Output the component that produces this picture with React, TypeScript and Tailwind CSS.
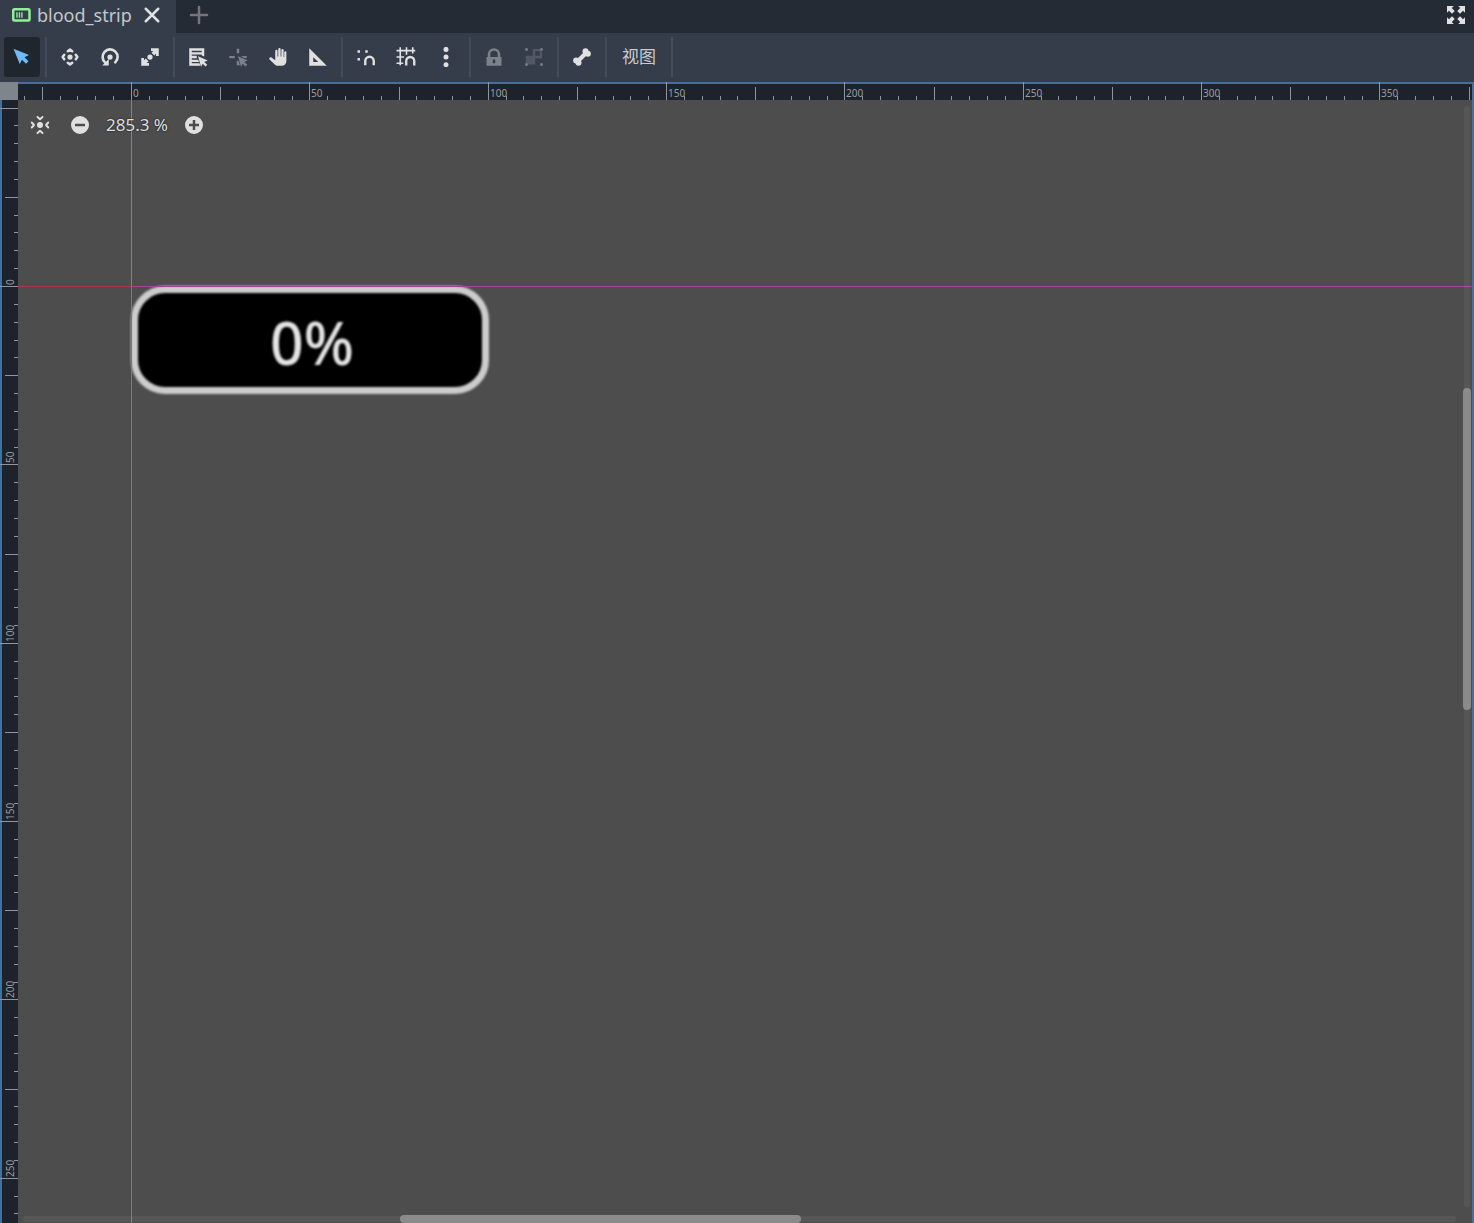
import { useEffect, useState, type ReactNode } from "react";

const ZOOM = 3.567;
const ORIGIN_X = 131;
const ORIGIN_Y = 204;
const RULER = 18;
const LABEL = 26;
const TOP_BARS = 82;

const scrollX = { start: 26.3, size: 28 };
const scrollY = { start: 25.6, size: 29.3 };

function Icon({ children, className = "" }: { children: ReactNode; className?: string }) {
  return (
    <svg viewBox="0 0 16 16" className={`h-5 w-5 shrink-0 ${className}`} fill="currentColor" aria-hidden="true">
      {children}
    </svg>
  );
}

const cursor = "M8 7.4 15.8 10.8 13 12 15.4 14.2 14 15.6 11.8 13.4 10.4 15.8z";

const icons = {
  select: <path d="M1.2 1.4 13.6 6.4 10 8.2 13.2 11.4 11.2 13.4 8 10.2 6.2 13.6z" />,
  move: (
    <>
      <circle cx="8" cy="8" r="2.1" />
      <path
        d="M6.2 3.4 8 2.1l1.8 1.3M6.2 12.6 8 13.9l1.8-1.3M3.4 6.2 2.1 8l1.3 1.8M12.6 6.2 13.9 8l-1.3 1.8"
        fill="none"
        stroke="currentColor"
        strokeWidth="2"
        strokeLinecap="round"
        strokeLinejoin="round"
      />
    </>
  ),
  rotate: (
    <>
      <circle cx="8" cy="8" r="2.1" />
      <path d="M4.2 12.5A6 6 0 1 1 12.2 12.3" fill="none" stroke="currentColor" strokeWidth="2.1" strokeLinecap="round" />
      <path d="M1.8 14.8h5.2V9.6z" />
    </>
  ),
  scale: (
    <>
      <circle cx="8" cy="8" r="2.1" />
      <path d="M8.8 1H15v6.2h-2.2V5.4l-1.4 1.4-2.2-2.2 1.4-1.4H8.8zM7.2 15H1V8.8h2.2v1.8l1.4-1.4 2.2 2.2-1.4 1.4h1.8z" />
    </>
  ),
  list: (
    <>
      <path d="M1 1h12v6.6l-2-.9V6H3v1h4v2H3v1.2h5.2l.6 1.8H3v1h6.2l.6 2H1zM3 3v1.2h8V3z" fillRule="evenodd" />
      <path d={cursor} />
    </>
  ),
  pivot: (
    <>
      <path d="M7 1.4h2V5H7zM1 7.2h4.4v1.8H1zM11 7.2h4v1.8h-1L11 7.9zM7 11h1.4l1.2 3.6H7z" />
      <path d={cursor} />
    </>
  ),
  hand: (
    <path d="M5.8 3a.9.9 0 0 1 1.8 0v4.5h.6V1.7a.9.9 0 0 1 1.9 0v5.8h.6V2.4a.9.9 0 0 1 1.8 0V8h.5V4a.9.9 0 0 1 1.7 0v7.2A4 4 0 0 1 10.8 15H8c-1.3 0-2.3-.5-3-1.4L1.2 9.9C.5 8.7 1.8 7.6 3 8.5l2.8 2z" />
  ),
  ruler: <path d="M1 1v14h14zM4.2 8.2 8.2 12H4.2z" fillRule="evenodd" />,
  snap: (
    <>
      <path d="M1.2 2.6h2v2h-2zM7.4 2.6h2v2h-2zM1.2 8.8h2v2h-2z" />
      <path d="M7.4 14.6v-3.4a3.4 3.4 0 0 1 6.8 0v3.4" fill="none" stroke="currentColor" strokeWidth="1.9" />
    </>
  ),
  grid: (
    <>
      <path d="M3.4.2v14.4M8.4.2v6M13.4.2v5M.4 2.9h15M.4 8h6M.4 13h5.4" fill="none" stroke="currentColor" strokeWidth="1.3" />
      <path d="M8.2 14.8v-3.6a3.2 3.2 0 0 1 6.4 0v3.6" fill="none" stroke="currentColor" strokeWidth="1.9" />
    </>
  ),
  dots: (
    <>
      <circle cx="8" cy="1.9" r="2" />
      <circle cx="8" cy="8" r="2" />
      <circle cx="8" cy="14.1" r="2" />
    </>
  ),
  lock: (
    <path
      d="M8 1a5 5 0 0 0-5 5v2H2v7h12V8h-1V6a5 5 0 0 0-5-5zm0 2a3 3 0 0 1 3 3v2H5V6a3 3 0 0 1 3-3zM7 10h2v3H7z"
      fillRule="evenodd"
    />
  ),
  group: (
    <>
      <path d="M1 1h2v2H1zM13 1h2v2h-2zM1 13h2v2H1zM13 13h2v2h-2z" />
      <path d="M7 1.6h6v1.8h1.4v5.8H9V14H3V13H1.4V7H7zM9 3.4V7h3.6V3.4z" fillRule="evenodd" opacity=".4" />
    </>
  ),
  bone: (
    <>
      <circle cx="10.8" cy="3.4" r="2.4" />
      <circle cx="12.7" cy="5.3" r="2.4" />
      <circle cx="3.3" cy="10.7" r="2.4" />
      <circle cx="5.2" cy="12.6" r="2.4" />
      <path d="M4.6 11.4l6.8-6.8" stroke="currentColor" strokeWidth="3.4" />
    </>
  ),
  center: (
    <>
      <circle cx="8" cy="8" r="2.4" />
      <path
        d="M6 1.6 8 3.4l2-1.8M6 14.4l2-1.8 2 1.8M1.4 6l1.8 2-1.8 2M14.6 6l-1.8 2 1.8 2"
        fill="none"
        stroke="currentColor"
        strokeWidth="1.5"
        strokeLinecap="round"
        strokeLinejoin="round"
      />
    </>
  ),
  minus: <path d="M8 .8a7.2 7.2 0 1 0 0 14.4A7.2 7.2 0 0 0 8 .8zM4 7h8v2H4z" fillRule="evenodd" />,
  plus: <path d="M8 .8a7.2 7.2 0 1 0 0 14.4A7.2 7.2 0 0 0 8 .8zM7 4h2v3h3v2H9v3H7V9H4V7h3z" fillRule="evenodd" />,
  expand: (
    <path d="M.8.8h5.4L4.6 2.4 7 4.8 4.8 7 2.4 4.6.8 6.2zM15.2.8v5.4l-1.6-1.6L11.2 7 9 4.8l2.4-2.4L9.8.8zM.8 15.2V9.8l1.6 1.6L4.8 9 7 11.2l-2.4 2.4 1.6 1.6zM15.2 15.2H9.8l1.6-1.6L9 11.2 11.2 9l2.4 2.4 1.6-1.6z" />
  ),
  progress: (
    <>
      <rect x="1" y="3.4" width="13" height="9" rx="1" fill="none" stroke="currentColor" strokeWidth="2" />
      <path d="M3.4 5.8h1.1v4.4H3.4zM5.4 5.8h1.1v4.4H5.4zM7.4 5.8h1.1v4.4H7.4z" />
    </>
  ),
};

type Tool = { icon: keyof typeof icons; label: string; active?: boolean; disabled?: boolean };

const toolGroups: Tool[][] = [
  [{ icon: "select", label: "选择模式", active: true }],
  [
    { icon: "move", label: "移动模式" },
    { icon: "rotate", label: "旋转模式" },
    { icon: "scale", label: "缩放模式" },
  ],
  [
    { icon: "list", label: "列表选择" },
    { icon: "pivot", label: "更改轴心", disabled: true },
    { icon: "hand", label: "平移模式" },
    { icon: "ruler", label: "标尺模式" },
  ],
  [
    { icon: "snap", label: "智能吸附" },
    { icon: "grid", label: "栅格吸附" },
    { icon: "dots", label: "吸附选项" },
  ],
  [
    { icon: "lock", label: "锁定", disabled: true },
    { icon: "group", label: "编组", disabled: true },
  ],
  [{ icon: "bone", label: "骨架选项" }],
];

function toolColor(tool: Tool) {
  if (tool.active) return "bg-[#1f262e] text-[#70bafa]";
  if (tool.disabled) return "text-[#7c818a]";
  return "text-[#e0e0e0]";
}

function Separator() {
  return <div className="mx-[5px] h-10 w-0.5 bg-[#454c59]" />;
}

function useWindowSize() {
  const [size, setSize] = useState({ width: window.innerWidth, height: window.innerHeight });

  useEffect(() => {
    const update = () => setSize({ width: window.innerWidth, height: window.innerHeight });
    window.addEventListener("resize", update);
    return () => window.removeEventListener("resize", update);
  }, []);

  return size;
}

// one tick every 5 units, a half tick every 25 and a labelled one every 50
function getTicks(origin: number, length: number) {
  const step = 5 * ZOOM;
  const first = Math.ceil((RULER - origin) / step);
  const last = Math.floor((length - origin) / step);
  return Array.from({ length: last - first + 1 }, (_, i) => {
    const tick = first + i;
    const position = Math.round(origin + tick * step);
    return {
      position,
      start: tick % 10 === 0 ? 0 : tick % 5 === 0 ? 5 : 14,
      label: tick % 10 === 0 && tick >= 0 && position + LABEL < length ? tick * 5 : null,
    };
  });
}

function HorizontalRuler({ length }: { length: number }) {
  return (
    <svg className="pointer-events-none absolute top-0 left-0 h-[18px] w-full" aria-hidden="true">
      {getTicks(ORIGIN_X, length).map(({ position, start, label }) => (
        <g key={position}>
          <rect x={position} y={start} width="1" height={RULER - start} fill="#90959c" />
          {label !== null && (
            <text x={position + 2} y="15" fill="#9a9da2" fontSize="10">
              {label}
            </text>
          )}
        </g>
      ))}
    </svg>
  );
}

function VerticalRuler({ length }: { length: number }) {
  return (
    <svg className="pointer-events-none absolute top-0 left-0 h-full w-[18px]" aria-hidden="true">
      {getTicks(ORIGIN_Y, length).map(({ position, start, label }) => (
        <g key={position}>
          <rect x={start} y={position} width={RULER - start} height="1" fill="#90959c" />
          {label !== null && (
            <text transform={`translate(14 ${position - 1}) rotate(-90)`} fill="#9a9da2" fontSize="10">
              {label}
            </text>
          )}
        </g>
      ))}
      <rect width="18" height="18" fill="#7f858c" />
    </svg>
  );
}

function TabBar() {
  return (
    <header className="flex h-[33px] items-stretch justify-between bg-[#252b34]">
      <div className="flex">
        <div className="flex w-44 items-center bg-[#363d4a] pb-[3px] pl-3">
          <Icon className="text-[#8eef97]">{icons.progress}</Icon>
          <span className="ml-[5px] text-[18px] leading-6 text-[#c4c7cb]">blood_strip</span>
          <button type="button" aria-label="关闭" className="mr-3 ml-auto flex w-6 items-center justify-center text-[#e0e0e0]">
            <Icon>
              <path d="m3 3 10 10M13 3 3 13" stroke="currentColor" strokeWidth="2" strokeLinecap="round" />
            </Icon>
          </button>
        </div>
        <button type="button" aria-label="添加场景" className="ml-[11px] flex w-6 items-center justify-center pb-[3px] text-[#747678]">
          <Icon>
            <path d="M8 1.6v12.8M1.6 8h12.8" stroke="currentColor" strokeWidth="2" strokeLinecap="round" />
          </Icon>
        </button>
      </div>
      <button type="button" aria-label="专注模式" className="mr-1 flex w-7 items-center justify-center pb-[3px] text-[#e0e0e0]">
        <Icon>{icons.expand}</Icon>
      </button>
    </header>
  );
}

function Toolbar() {
  return (
    <div className="flex h-[49px] items-start bg-[#363d4a] pt-1 pl-1">
      {toolGroups.map((group, index) => (
        <div key={index} className="flex items-center">
          <div className="flex gap-1">
            {group.map((tool) => (
              <button
                key={tool.icon}
                type="button"
                aria-label={tool.label}
                disabled={tool.disabled}
                className={`flex h-10 w-9 items-center justify-center rounded-[3px] ${toolColor(tool)}`}
              >
                <Icon>{icons[tool.icon]}</Icon>
              </button>
            ))}
          </div>
          <Separator />
        </div>
      ))}
      <button type="button" className="h-10 px-[10px] text-[17px] text-[#c8cacf]">
        视图
      </button>
      <Separator />
    </div>
  );
}

function Viewport() {
  const { width, height } = useWindowSize();

  return (
    <main className="relative flex-1 overflow-hidden bg-[#4d4d4d]">
      <div className="absolute inset-x-0 top-0 h-[18px] bg-[#1e232b]" />
      <div className="absolute inset-y-0 left-0 w-[18px] bg-[#1e232b]" />

      <div className="absolute top-[204px] left-[131px] flex h-[108px] w-[358px] items-center justify-center rounded-[34px] border-[7px] border-[#cccccc] bg-black blur-[1px]">
        <span className="pt-1 pl-1 text-[59px] leading-none font-medium text-[#e4e4e4]">0%</span>
      </div>

      <div className="absolute top-[204px] bottom-0 left-[131px] w-px bg-[#708472]" />
      <div className="absolute top-[18px] left-[131px] h-[186px] w-px bg-[#76983a]" />
      <div className="absolute top-[204px] left-[18px] h-px w-[113px] bg-[#b03545]" />
      <div className="absolute top-[204px] right-0 left-[131px] h-px bg-[#a04695]" />

      <div className="pointer-events-none absolute inset-0 border-x-2 border-t-2 border-[#44719b]" />
      <HorizontalRuler length={width} />
      <VerticalRuler length={height - TOP_BARS} />

      <div className="absolute top-[25px] left-[22px] flex text-[#e0e0e0]">
        <button type="button" aria-label="居中视图" className="flex h-9 w-9 items-center justify-center">
          <Icon>{icons.center}</Icon>
        </button>
        <button type="button" aria-label="缩小" className="ml-1 flex h-9 w-9 items-center justify-center">
          <Icon>{icons.minus}</Icon>
        </button>
        <button type="button" className="h-9 w-[78px] text-center text-[17px] [text-shadow:0_0_2px_#000]">
          285.3 %
        </button>
        <button type="button" aria-label="放大" className="flex h-9 w-9 items-center justify-center">
          <Icon>{icons.plus}</Icon>
        </button>
      </div>

      <div className="absolute top-6 right-1 bottom-4 w-[6px] rounded-full bg-white/5">
        <div
          className="absolute -inset-x-px rounded-full bg-[#8b8b8b]"
          style={{ top: `${scrollY.start}%`, height: `${scrollY.size}%` }}
        />
      </div>
      <div className="absolute right-[18px] bottom-px left-[23px] h-[6px] rounded-full bg-white/5">
        <div
          className="absolute -inset-y-px rounded-full bg-[#8b8b8b]"
          style={{ left: `${scrollX.start}%`, width: `${scrollX.size}%` }}
        />
      </div>
    </main>
  );
}

export default function App() {
  return (
    <div className="flex min-h-screen flex-col bg-[#363d4a] font-['Noto_Sans','Noto_Sans_CJK_SC',sans-serif]">
      <TabBar />
      <Toolbar />
      <Viewport />
    </div>
  );
}
